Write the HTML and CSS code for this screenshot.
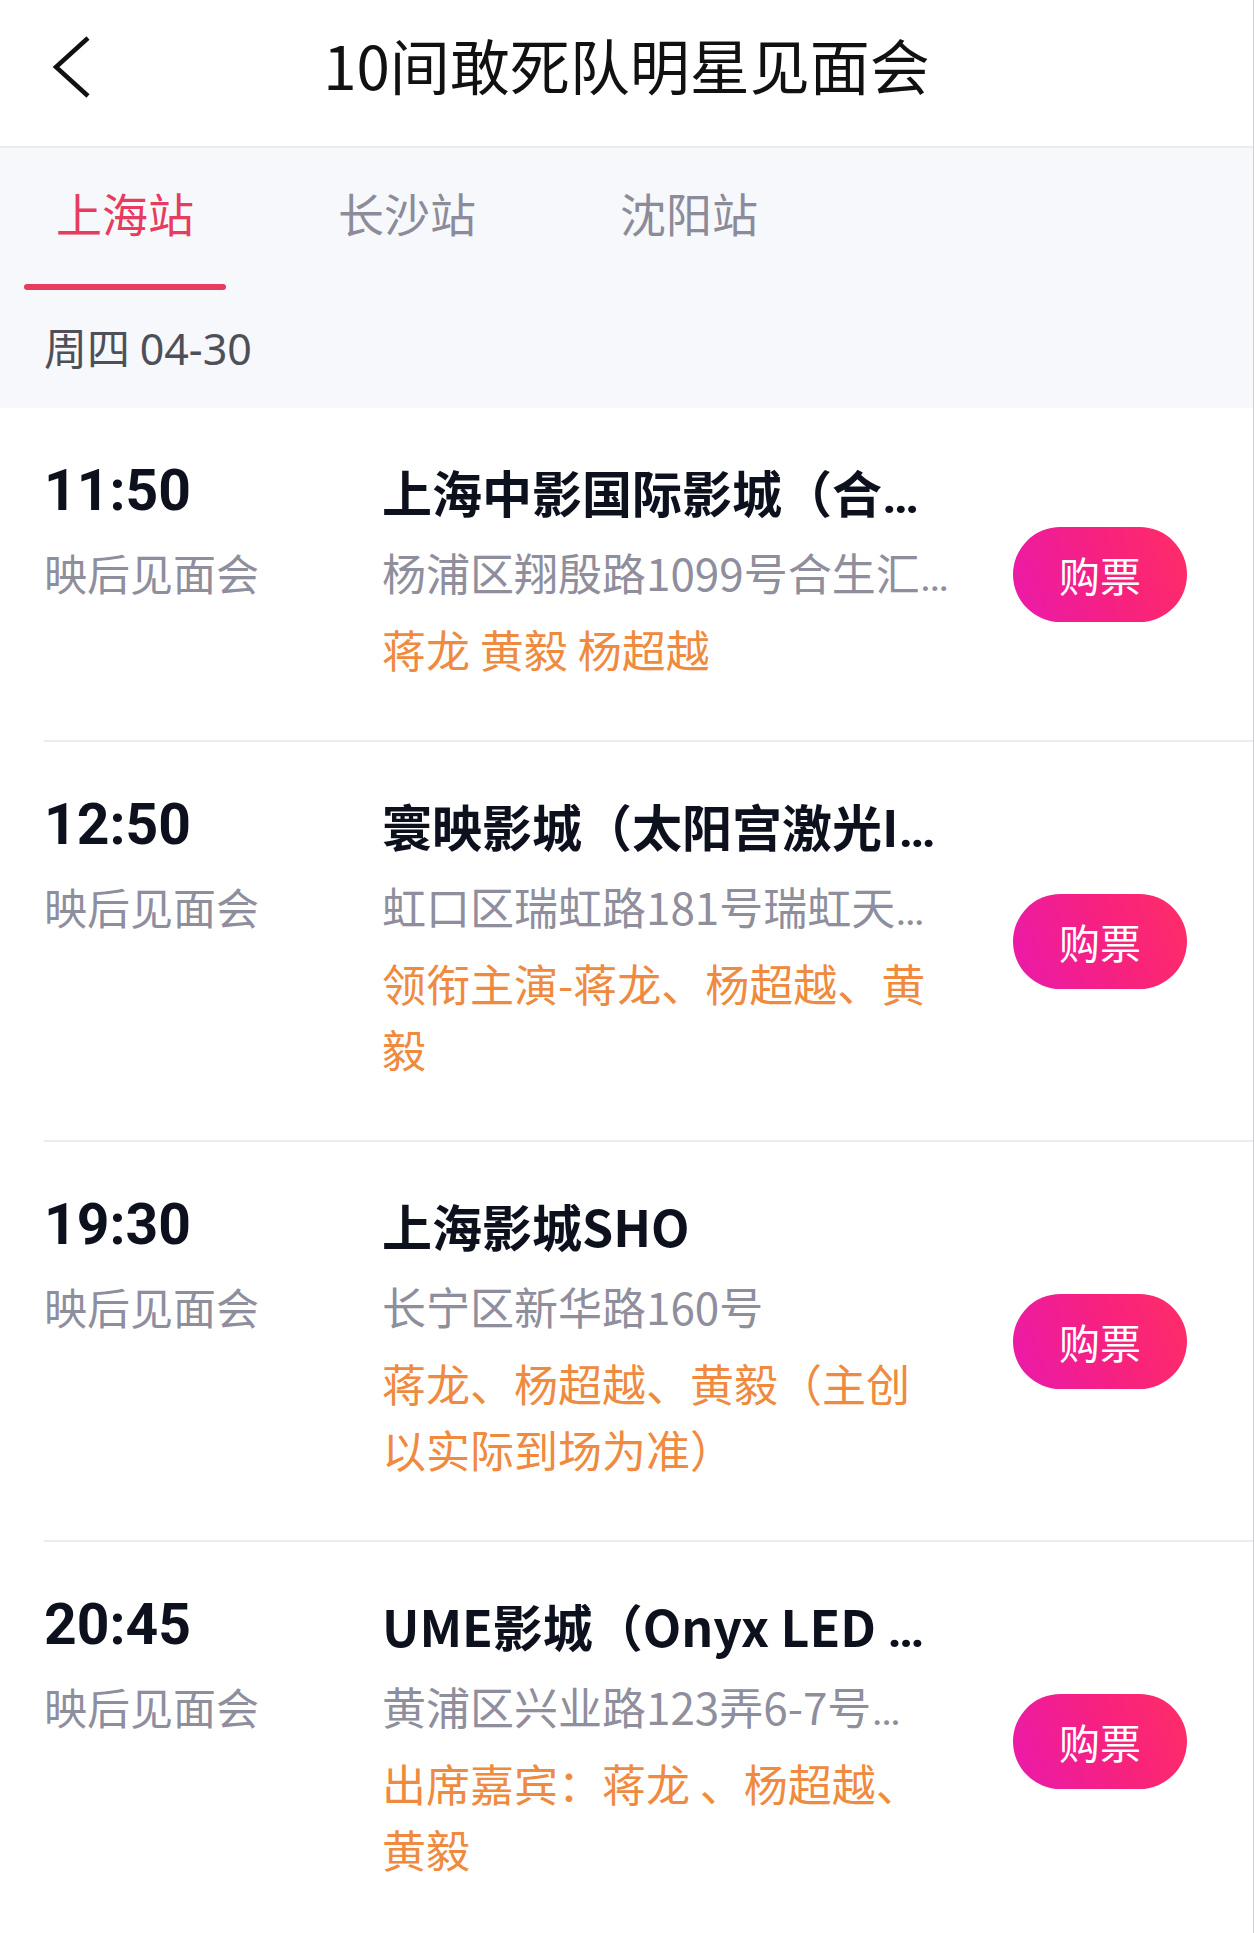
FILE: index.html
```html
<!DOCTYPE html>
<html lang="zh-CN">
<head>
<meta charset="UTF-8">
<meta name="viewport" content="width=device-width, initial-scale=1.0">
<title>10间敢死队明星见面会</title>
<link rel="stylesheet" href="styles.css">
</head>
<body>
<div class="page">
  <header class="topbar">
    <a class="back">
      <svg width="44" height="66" viewBox="0 0 44 66"><path d="M40 4 L8 33 L40 62" fill="none" stroke="#111" stroke-width="4.5"/></svg>
    </a>
    <h1 class="title">10间敢死队明星见面会</h1>
    <span></span>
  </header>

  <div class="filter">
    <div class="tabs">
      <div class="tab active">上海站</div>
      <div class="tab">长沙站</div>
      <div class="tab">沈阳站</div>
    </div>
    <div class="date">周四 <span class="num">04-30</span></div>
  </div>

  <div class="list">
    <div class="item">
      <div class="left">
        <div class="time">11:50</div>
        <div class="sub">映后见面会</div>
      </div>
      <div class="mid">
        <div class="name">上海中影国际影城（合<span class="dots">…</span></div>
        <div class="addr">杨浦区翔殷路1099号合生汇<span class="dots">…</span></div>
        <div class="cast">蒋龙 黄毅 杨超越</div>
      </div>
      <a class="buy">购票</a>
    </div>

    <div class="item">
      <div class="left">
        <div class="time">12:50</div>
        <div class="sub">映后见面会</div>
      </div>
      <div class="mid">
        <div class="name">寰映影城（太阳宫激光I<span class="dots">…</span></div>
        <div class="addr">虹口区瑞虹路181号瑞虹天<span class="dots">…</span></div>
        <div class="cast">领衔主演-蒋龙、杨超越、黄毅</div>
      </div>
      <a class="buy">购票</a>
    </div>

    <div class="item">
      <div class="left">
        <div class="time">19:30</div>
        <div class="sub">映后见面会</div>
      </div>
      <div class="mid">
        <div class="name">上海影城SHO</div>
        <div class="addr">长宁区新华路160号</div>
        <div class="cast">蒋龙、杨超越、黄毅（主创以实际到场为准）</div>
      </div>
      <a class="buy">购票</a>
    </div>

    <div class="item">
      <div class="left">
        <div class="time">20:45</div>
        <div class="sub">映后见面会</div>
      </div>
      <div class="mid">
        <div class="name">UME影城（Onyx LED <span class="dots">…</span></div>
        <div class="addr">黄浦区兴业路123弄6-7号<span class="dots">…</span></div>
        <div class="cast">出席嘉宾：蒋龙 、杨超越、黄毅</div>
      </div>
      <a class="buy">购票</a>
    </div>
  </div>
</div>
</body>
</html>
```

FILE: styles.css
```css
body {
  margin: 0;
  padding: 0;
  font-family: "Noto Sans CJK SC", "Noto Sans", sans-serif;
  background-color: #fff;
}
.page {
  box-sizing: border-box;
  width: 100%;
  min-height: 100vh;
  border-right: 1px solid #cfcfd2;
}

/* barra superior */
.topbar {
  display: grid;
  grid-template-columns: 1fr auto 1fr;
  align-items: center;
  box-sizing: border-box;
  height: 148px;
  padding-bottom: 20px;
  border-bottom: 2px solid #ececee;
}
.back {
  display: flex;
  padding-left: 48px;
  margin-top: 8px;
}
.title {
  margin: 0;
  font-size: 60px;
  font-weight: 400;
  color: #111;
}

/* pestañas y fecha */
.filter {
  background-color: #f7f8fc;
}
.tabs {
  display: flex;
  align-items: flex-start;
  gap: 80px;
  padding-left: 24px;
}
.tab {
  width: 202px;
  text-align: center;
  font-size: 46px;
  line-height: 128px;
  color: #8c8b99;
}
.tab.active {
  color: #e63c5d;
}
.tab.active::after {
  content: "";
  display: block;
  height: 6px;
  margin-top: 8px;
  border-radius: 3px;
  background-color: #e63c5d;
}
.date {
  padding: 26px 44px 32px;
  font-size: 43px;
  line-height: 60px;
  color: #4f4f57;
}
.num {
  font-family: "Noto Sans", sans-serif;
  line-height: 0;
}

/* lista de funciones */
.item {
  display: flex;
  margin-left: 44px;
  padding: 43px 0 58px;
  border-bottom: 2px solid #ececef;
}
.left {
  width: 338px;
  flex-shrink: 0;
}
.time {
  font-family: Roboto, "Noto Sans", sans-serif;
  font-weight: 700;
  font-size: 57px;
  line-height: 80px;
  color: #0c111d;
}
.sub {
  margin-top: 9px;
  font-size: 43px;
  line-height: 64px;
  color: #8f8e9d;
}
.mid {
  width: 590px;
  flex-shrink: 0;
}
.name {
  font-weight: 700;
  font-size: 50px;
  line-height: 80px;
  color: #0c111d;
  white-space: nowrap;
  overflow: hidden;
}
.addr {
  margin-top: 9px;
  font-size: 44px;
  line-height: 64px;
  color: #8f8e9d;
  white-space: nowrap;
  overflow: hidden;
}
.dots {
  font-family: Roboto, sans-serif;
  line-height: 0;
}
.cast {
  max-width: 565px;
  margin-top: 12px;
  font-size: 44px;
  line-height: 66px;
  color: #ef8a3e;
}
.buy {
  align-self: center;
  margin: 15px 0 0 41px;
  width: 174px;
  height: 95px;
  border-radius: 48px;
  background: linear-gradient(70deg, #ea1aab 0%, #f7217f 55%, #ff2d66 100%);
  color: #fff;
  font-size: 41px;
  line-height: 95px;
  text-align: center;
}
```
